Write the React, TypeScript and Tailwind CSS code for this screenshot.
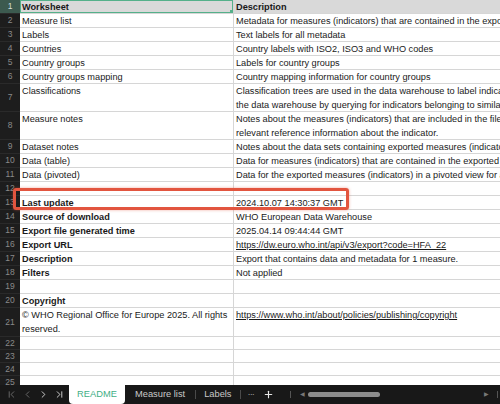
import React from "react";
import { ChevronFirst, ChevronLast, ChevronLeft, ChevronRight, Plus } from "lucide-react";

type Row = {
  n: number;
  a?: string | string[];
  b?: string | string[];
  bold?: boolean;
  link?: boolean;
  h?: number;
};

const rows: Row[] = [
  { n: 1, a: "Worksheet", b: "Description", bold: true },
  { n: 2, a: "Measure list", b: "Metadata for measures (indicators) that are contained in the export file" },
  { n: 3, a: "Labels", b: "Text labels for all metadata" },
  { n: 4, a: "Countries", b: "Country labels with ISO2, ISO3 and WHO codes" },
  { n: 5, a: "Country groups", b: "Labels for country groups" },
  { n: 6, a: "Country groups mapping", b: "Country mapping information for country groups" },
  {
    n: 7,
    a: "Classifications",
    b: [
      "Classification trees are used in the data warehouse to label indicators and",
      "the data warehouse by querying for indicators belonging to similar topics",
    ],
    h: 28,
  },
  {
    n: 8,
    a: "Measure notes",
    b: [
      "Notes about the measures (indicators) that are included in the file and",
      "relevant reference information about the indicator.",
    ],
    h: 28,
  },
  { n: 9, a: "Dataset notes", b: "Notes about the data sets containing exported measures (indicators)" },
  { n: 10, a: "Data (table)", b: "Data for measures (indicators) that are contained in the exported file" },
  { n: 11, a: "Data (pivoted)", b: "Data for the exported measures (indicators) in a pivoted view for analysis" },
  { n: 12 },
  { n: 13, a: "Last update", b: "2024.10.07 14:30:37 GMT", bold: true },
  { n: 14, a: "Source of download", b: "WHO European Data Warehouse", bold: true },
  { n: 15, a: "Export file generated time", b: "2025.04.14 09:44:44 GMT", bold: true },
  { n: 16, a: "Export URL", b: "https://dw.euro.who.int/api/v3/export?code=HFA_22", bold: true, link: true },
  { n: 17, a: "Description", b: "Export that contains data and metadata for 1 measure.", bold: true },
  { n: 18, a: "Filters", b: "Not applied", bold: true },
  { n: 19 },
  { n: 20, a: "Copyright", bold: true },
  {
    n: 21,
    a: ["© WHO Regional Office for Europe 2025. All rights", "reserved."],
    b: "https://www.who.int/about/policies/publishing/copyright",
    link: true,
    h: 29,
  },
  { n: 22, h: 13 },
  { n: 23, h: 13 },
  { n: 24, h: 13 },
  { n: 25, h: 13 },
];

const lines = (v?: string | string[]) => (v === undefined ? [] : Array.isArray(v) ? v : [v]);

const SheetRow = ({ row }: { row: Row }) => {
  const header = row.n === 1;
  const h = row.h ?? 14;
  return (
    <div className="flex shrink-0" style={{ height: h }}>
      <div
        className={`w-[20px] shrink-0 flex items-center justify-center text-[8.5px] border-b border-[#2a2a2a] ${
          header ? "bg-[#3c5a4f] text-[#d5ddd9]" : "bg-[#1d1d1d] text-[#8a8a8a]"
        }`}
      >
        {row.n}
      </div>
      <div
        className={`relative w-[214px] shrink-0 overflow-hidden whitespace-nowrap pl-[2px] leading-[14px] border-b border-r border-[#d6d6d6] ${
          header ? "bg-[#d9d9d9]" : "bg-white"
        } ${row.bold ? "font-bold" : ""}`}
      >
        {lines(row.a).map((t) => (
          <div key={t}>{t}</div>
        ))}
        {header && (
          <>
            <div className="absolute inset-0 border border-[#55b08a]" />
            <div className="absolute right-[-1px] bottom-[-1px] w-[4px] h-[4px] bg-[#55b08a]" />
          </>
        )}
      </div>
      <div
        className={`flex-1 overflow-hidden whitespace-nowrap pl-[2px] leading-[14px] border-b border-[#d6d6d6] ${
          header ? "bg-[#d9d9d9] font-bold" : "bg-white"
        } ${row.link ? "underline" : ""}`}
      >
        {lines(row.b).map((t) => (
          <div key={t}>{t}</div>
        ))}
      </div>
    </div>
  );
};

export default function App() {
  return (
    <div className="w-[500px] h-[404px] flex flex-col overflow-hidden bg-white text-[9.2px] text-[#1a1a1a] font-['Liberation_Sans',Arial,sans-serif]">
      <div className="relative h-[385px] shrink-0 overflow-hidden flex flex-col">
        {rows.map((r) => (
          <SheetRow key={r.n} row={r} />
        ))}
        {/* highlight around "Last update" */}
        <div className="absolute left-[13px] top-[188px] w-[336px] h-[22px] border-[3px] border-[#e2553f] rounded-[3px] shadow-[0_0_3px_rgba(226,85,63,0.5)]" />
      </div>

      <div className="flex-1 flex items-center bg-[#181818] text-[#c9c9c9] text-[9.3px]">
        <div className="flex items-center gap-[5px] pl-[6px] w-[69px] shrink-0">
          <ChevronFirst size={11} strokeWidth={2} className="text-[#6d6d6d]" />
          <ChevronLeft size={11} strokeWidth={2} className="text-[#6d6d6d]" />
          <ChevronRight size={11} strokeWidth={2} className="text-[#d8d8d8]" />
          <ChevronLast size={11} strokeWidth={2} className="text-[#d8d8d8]" />
        </div>
        <div className="self-stretch w-[56px] shrink-0 flex items-center justify-center bg-white text-[#3fae85] rounded-b-[4px]">
          README
        </div>
        <div className="px-[10px]">Measure list</div>
        <div className="w-px h-[9px] bg-[#4a4a4a]" />
        <div className="px-[8px]">Labels</div>
        <div className="w-px h-[9px] bg-[#4a4a4a]" />
        <div className="pl-[7px] text-[#a0a0a0] tracking-[-1px]">···</div>
        <Plus size={11} strokeWidth={2.5} className="ml-[9px] text-[#e8e8e8]" />
        <div className="ml-[16px] w-px h-[7px] bg-[#555]" />
        <div className="ml-[9px] text-[6px] text-[#777]">◀</div>
        <div className="ml-[3px] w-[72px] h-[5px] rounded-full bg-[#8c8c8c]" />
        <div className="ml-auto text-[6px] text-[#777]">▶</div>
        <div className="ml-[8px] mr-[2px] w-px h-[7px] bg-[#555]" />
      </div>
    </div>
  );
}
